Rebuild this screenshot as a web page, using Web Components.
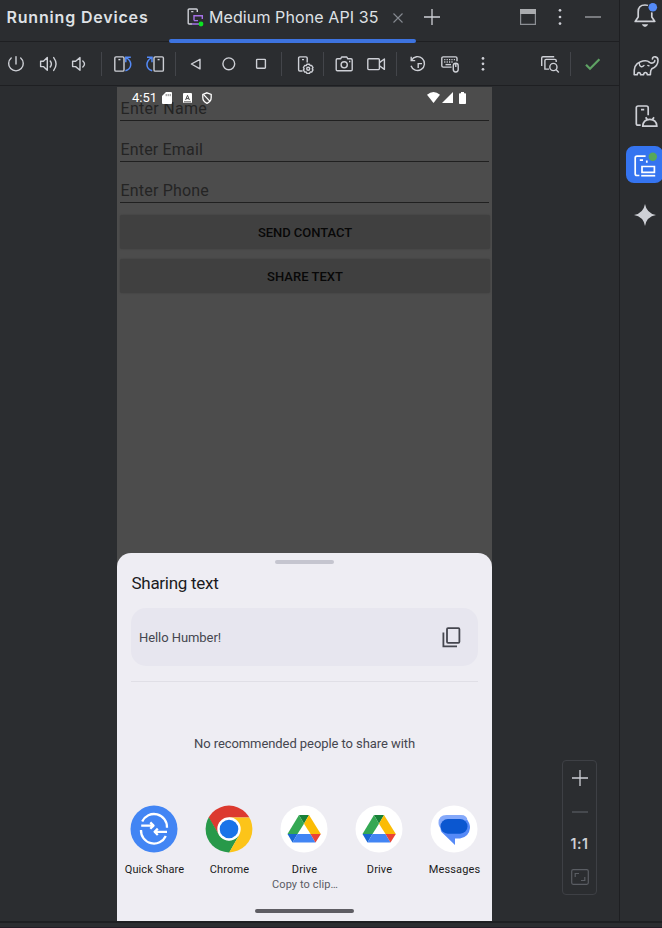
<!DOCTYPE html>
<html lang="en"><head><meta charset="utf-8"><title>Running Devices</title>
<style>
html,body{margin:0;height:928px;overflow:hidden;background:#2b2d30}
body{font-family:Inter,"Liberation Sans",sans-serif;color:#dfe1e5}
</style></head><body>
<ide-window></ide-window>
<script>
const G='stroke="#ced0d6" fill="none" stroke-width="1.4"';
const GEAR=(x,y)=>`<g transform="translate(${x} ${y})"><path d="M-1.3-4.6H1.3L2-3.2 3.5-3.3 4.8-1.1 4 0 4.8 1.1 3.5 3.3 2 3.2 1.3 4.6H-1.3L-2 3.2-3.5 3.3-4.8 1.1-4 0-4.8-1.1-3.5-3.3-2-3.2Z" stroke-linejoin="round"/><circle r="1.5"/></g>`;
const DRIVE='<circle cx="24" cy="24" r="23.5" fill="#fff"/><path d="M19 10h10l-5 8.7z" fill="#188038"/><path d="M19 10 7.5 29h10L24 18.7z" fill="#34a853"/><path d="M29 10 24 18.7 30.5 29h10.3z" fill="#fbbc04"/><path d="M7.5 29h10l-5 8.5z" fill="#1967d2"/><path d="M17.5 29h13l5 8.5h-23z" fill="#4285f4"/><path d="M30.5 29h10.3l-5.3 8.5z" fill="#ea4335"/>';
/* name: [width, height, markup] */
const ICONS={
power:[20,20,`<g ${G} stroke-linecap="round"><path d="M5.2 4A7.3 7.3 0 1 0 14.7 4M10 2.6V10"/></g>`],
volup:[20,20,`<g ${G} stroke-linejoin="round" stroke-linecap="round"><path d="M2.6 7.3H5.4L9.3 3.6V16.2L5.4 12.6H2.6ZM12.2 7Q14.6 10 12.2 13M15.7 3.6Q20.4 10 15.7 16.4"/></g>`],
voldown:[20,20,`<g ${G} stroke-linejoin="round" stroke-linecap="round"><path d="M3.6 7.3H6.6L11 3.6V16.2L6.6 12.6H3.6ZM13.8 7Q17.2 10 13.8 13"/></g>`],
rotl:[20,20,`<g ${G}><rect x="2.8" y="2.9" width="9.2" height="14.2" rx="1.2"/><path d="M6.4 5.6h2"/><g stroke="#548af7" stroke-width="1.5"><path d="M13.4 16.8C20 15 20.6 7.5 14.6 3.8M13.8 8.2V3.3H18.8"/></g></g>`],
rotr:[20,20,`<g ${G}><rect x="9" y="2.9" width="9.4" height="14.2" rx="1.2"/><path d="M12.6 5.6h2"/><g stroke="#548af7" stroke-width="1.5"><path d="M7.2 16.8C.6 15 .2 7.5 6.2 3.8M2 3.3H7V8.2"/></g></g>`],
back:[20,20,`<path ${G} stroke-linejoin="round" d="M5.4 10 14 5.3V14.9Z"/>`],
home:[20,20,`<circle ${G} cx="9.8" cy="9.8" r="5.9"/>`],
square:[20,20,`<rect ${G} x="5.6" y="5.4" width="8.8" height="8.8" rx=".7"/>`],
device:[20,20,`<g ${G}><path d="M7.5 17H4.8Q3.6 17 3.6 15.8V4Q3.6 2.9 4.8 2.9H11Q12.2 2.9 12.2 4V8.6M7 5.6h2"/>${GEAR(13.2,14.8)}</g>`],
camera:[20,20,`<g ${G} stroke-linejoin="round"><path d="M6.6 4.8 7.6 3H12.8L13.8 4.8H17Q18.2 4.8 18.2 6V15.6Q18.2 16.8 17 16.8H3.4Q2.2 16.8 2.2 15.6V6Q2.2 4.8 3.4 4.8Z"/><circle cx="10.2" cy="10.8" r="3.1"/><path d="M15 7.5h1.4"/></g>`],
video:[20,20,`<g ${G} stroke-linejoin="round"><rect x="1.8" y="4.8" width="11.6" height="10.8" rx="1"/><path d="M13.4 8.6 18.4 5V15.4L13.4 11.8"/></g>`],
restore:[20,20,`<g ${G}><path d="M3.5 6.3A6.9 6.9 0 1 1 3 11.7M3.2 2.8V6.6H7.2M10.2 14V9.6H14"/></g>`],
keyboard:[20,20,`<g ${G}><path d="M11.6 13.1H3.2Q1.8 13.1 1.8 11.7V4.2Q1.8 2.9 3.2 2.9H15.6Q17 2.9 17 4.2V7.2"/><path d="M4.2 5.6H15M4.2 8H13" stroke-dasharray="1.2 1.2"/><path d="M5.5 10.6H11"/><rect x="13.3" y="9.3" width="4.9" height="8.7" rx="2.4"/><path d="M15.8 9.5V13"/></g>`],
more:[20,20,`<g fill="#ced0d6"><circle cx="10" cy="4.4" r="1.35"/><circle cx="10" cy="9.8" r="1.35"/><circle cx="10" cy="15.3" r="1.35"/></g>`],
inspect:[20,20,`<g ${G}><path d="M1.7 12V4Q1.7 2.8 3 2.8H14.2M9 15.1H4.9V6.5Q4.9 5.4 6 5.4H15Q16.2 5.4 16.2 6.5V8"/><circle cx="13.4" cy="13" r="3.6"/><path d="M16 15.6 18.8 18.4"/></g>`],
check:[20,20,`<path d="M4 10.7 8 14.8 17.4 5.2" fill="none" stroke="#5fa264" stroke-width="2.2"/>`],
tabdevice:[20,20,`<g ${G}><path d="M6 17H3.2Q2.2 17 2.2 16V3Q2.2 2 3.2 2H10.3Q11.3 2 11.3 3V5M5.2 4.6h2.2"/><g stroke="#a571e6"><path d="M8 13.6V8.7H16.3V12M8 13.6H12M6 17H13"/></g></g><circle cx="15" cy="17" r="2.4" fill="#0de422"/>`],
close:[12,12,`<path d="M1.5 1.5 10.5 10.5M10.5 1.5 1.5 10.5" stroke="#868a91" stroke-width="1.1"/>`],
plus:[18,18,`<path d="M9 1V17M1 9H17" stroke="#ced0d6" stroke-width="1.3"/>`],
window:[16,16,`<path d="M.6.6H15.4V15.4H.6Z" fill="none" stroke="#8c8f94" stroke-width="1.2"/><path d="M0 0H16V5H0Z" fill="#aaacaf"/>`],
dots:[6,18,`<g fill="#ced0d6"><circle cx="3" cy="2.3" r="1.35"/><circle cx="3" cy="9" r="1.35"/><circle cx="3" cy="15.6" r="1.35"/></g>`],
minus:[16,2,`<path d="M0 1H16" stroke="#9a9ca1" stroke-width="1.4"/>`],
bell:[26,26,`<g ${G} style="stroke-width:1.7"><path d="M3.2 19.4 6.2 15V9.8Q6.2 3 13 3T19.8 9.8V15L22.8 19.4Z" stroke-linejoin="round"/></g><path d="M9.8 22.3H16.2Q15 25 13 25T9.8 22.3Z" fill="#ced0d6"/><circle cx="20.8" cy="5.2" r="5.2" fill="#2b2d30"/><circle cx="20.8" cy="5.2" r="4.3" fill="#548af7"/>`],
gradle:[28,24,`<g ${G} style="stroke-width:1.6" stroke-linejoin="round" stroke-linecap="round"><path d="M20.4 5C20.8 2 26 1.8 26 6.4C26 10.6 22.4 13.6 19.8 14.8C18.2 16.2 18.6 18 18.4 20.8H15.4C15 17.8 11.9 17.8 11.5 20.8H8.7C8.3 17.8 5.6 17.8 5.2 20.8H2.2C1.8 14 4 9.2 8 8C12 6.4 15.5 6.4 17.6 8.4C20 10 23 8.6 22.8 6.6"/><path d="M7.2 9C7.4 13 10 13.6 12 11.4" stroke-width="1.4"/><path d="M15.8 11.4 17 11.8" stroke-width="1.4"/></g>`],
android:[26,26,`<g ${G} style="stroke-width:1.7"><path d="M7.7 22.2H5.2Q3.3 22.2 3.3 20.4V4.8Q3.3 3 5.2 3H13.4Q15.2 3 15.2 4.8V12.3M8 6.7h3.2"/><path d="M9.7 23.2Q10.2 16.4 16.8 16.4T23.9 23.2ZM12.7 14.2 14.4 17M21 14.2 19.2 17" stroke-linejoin="round"/></g>`],
running:[26,26,`<g fill="none" stroke="#fff" stroke-width="1.7"><path d="M7.4 22.5H5Q3.2 22.5 3.2 20.7V5Q3.2 3.2 5 3.2H13.6M14.8 7.5V9.8M7.8 7.1H11"/><path d="M10 13.5H22.4V19.3H10Z"/><path d="M9.2 22.7H23.2"/></g><circle cx="20.8" cy="3.7" r="4.2" fill="#57a85b"/>`],
spark:[22,22,`<path d="M11 0Q12.6 9.4 22 11Q12.6 12.6 11 22Q9.4 12.6 0 11Q9.4 9.4 11 0Z" fill="#ced0d6"/>`],
sd:[10,12,`<path d="M4 0H9Q10 0 10 1V11Q10 12 9 12H1Q0 12 0 11V4Z" fill="#fff"/><path d="M4.2 2V4.2M6.2 2V4.2M8.2 2V4.2" stroke="#777" stroke-width=".9"/>`],
aicon:[9,10,`<rect width="9" height="10" rx="1" fill="#fff"/><path d="M2.6 7 4.5 2.3 6.4 7M3.2 5.6H5.8M1 8.9H8" fill="none" stroke="#4c4c4c"/>`],
shield:[10,12,`<path d="M5 .8 9.2 2.4V5.5Q9.2 9.5 5 11.3Q.8 9.5.8 5.5V2.4Z" fill="none" stroke="#fff" stroke-width="1.3"/><path d="M1.4 2.4 8 9.4" stroke="#fff" stroke-width="1.3" fill="none"/>`],
wifi:[13,11,`<path d="M0 2.8Q6.5-2.6 13 2.8L6.5 11Z" fill="#fff"/>`],
signal:[11,11,`<path d="M11 0V11H0Z" fill="#fff"/>`],
battery:[7,12,`<path d="M2 0H5V1.2H6.2Q7 1.2 7 2V11.2Q7 12 6.2 12H.8Q0 12 0 11.2V2Q0 1.2.8 1.2H2Z" fill="#fff"/>`],
copy:[19,21,`<g fill="none" stroke="#45464f" stroke-width="1.8"><rect x="5" y="1.2" width="12.4" height="14.6" rx="1"/><path d="M1.4 5.5V19.4H15"/></g>`],
quick:[48,48,`<circle cx="24" cy="24" r="23.5" fill="#4285f4"/><g fill="none" stroke="#fff" stroke-width="2.3" stroke-linejoin="round"><path d="M12.2 16.6A13 13 0 0 1 37 22.8M11.2 20.6H23M20.3 17.4 23.5 20.6 20.3 23.8M11 25A13 13 0 0 0 35.8 31M37 26.8H25M27.8 23.6 24.6 26.8 27.8 30"/></g>`],
chrome:[48,48,`<clipPath id="c"><circle cx="24" cy="24" r="23.4"/></clipPath><g clip-path="url(#c)"><path d="M0 0H48V12.5H24L14 30 3.5 12.5 0 14Z" fill="#dc3a2f"/><path d="M3.7 12 14 29.8 24 35.5 34.2 30 24 48H0V12Z" fill="#28994a"/><path d="M24 12.5H48V48H23.9L34.2 30Z" fill="#fcc419"/></g><circle cx="24" cy="24" r="11.7" fill="#fff"/><circle cx="24" cy="24" r="9.3" fill="#1a73e8"/>`],
drive:[48,48,DRIVE],
messages:[48,48,`<circle cx="24" cy="24" r="23.5" fill="#fff"/><path d="M16.5 10H31Q37 10 37.5 15.5L36 25H13Q8.5 22.5 8.5 18Q8.5 10 16.5 10Z" fill="#85a9fa"/><path d="M37.2 15Q40 18 40 23Q39 32 30 33.5H25V40L11.5 27Q10 25 11 20Z" fill="#568af7"/><rect x="10.5" y="14" width="27" height="14.7" rx="7.3" fill="#0b57d0"/>`],
fit:[18,16,`<g fill="none" stroke="#5a5d63" stroke-width="1.2"><rect x=".7" y=".7" width="16.6" height="14.6" rx="1.5"/><path d="M4.2 8V4.5H8M10 11.5H13.8V8"/></g>`],
line:[18,2,`<path d="M1 1H17" stroke="#5a5d63" stroke-width="1.2"/>`]
};
function define(name,html,after){
  const t=document.createElement('template');t.innerHTML=html;
  customElements.define(name,class extends HTMLElement{
    connectedCallback(){
      if(this.shadowRoot)return;
      this.attachShadow({mode:'open'}).append(t.content.cloneNode(true));
      if(after)after.call(this,this.shadowRoot);
    }
  });
}
define('ui-icon','<style>:host{display:block;flex:none}svg,span{display:block;overflow:visible}</style><span></span>',function(r){
  const [w,h,m]=ICONS[this.getAttribute('name')];
  r.querySelector('span').innerHTML=`<svg width="${w}" height="${h}" viewBox="0 0 ${w} ${h}">${m}</svg>`;
});
/* One line of text, tracked so that it occupies the given width. */
define('text-run','<style>:host{display:block;white-space:nowrap;flex:none}span{display:inline-block}</style><span></span>',function(r){
  const s=r.querySelector('span');s.textContent=this.getAttribute('text');
  const w=+this.getAttribute('w');
  s.style.letterSpacing=((w-s.getBoundingClientRect().width)/s.textContent.length)+'px';
});
define('tool-sep','<style>:host{display:block;flex:none;width:1px;height:24px;margin-top:-2px;background:#43454a}</style>');
define('tab-bar',`<style>
:host{display:grid;grid-template-columns:169px 247px 1fr;height:41px;border-bottom:1px solid #1e1f22;box-sizing:content-box}
.t{padding:7px 0 0 6.5px;font:600 16px/20px Inter,sans-serif}
.tab{display:flex;height:43px;box-sizing:border-box;padding:7px 0 0 17px;position:relative}
.tab::after{content:"";position:absolute;left:0;right:0;bottom:0;height:4px;border-radius:2px;background:#3d73df}
.tab text-run{font:400 16px/20px Inter,sans-serif;margin-left:3px}
.tab ui-icon[name=close]{margin:5px 0 0 13px}
.r{display:flex}
</style><text-run class="t" text="Running Devices" w="142"></text-run>
<div class="tab"><ui-icon name="tabdevice"></ui-icon><text-run text="Medium Phone API 35" w="169.5"></text-run><ui-icon name="close"></ui-icon></div>
<div class="r"><ui-icon name="plus" style="margin:8px 0 0 7px"></ui-icon><ui-icon name="window" style="margin:9px 0 0 79px"></ui-icon><ui-icon name="dots" style="margin:8px 0 0 21px"></ui-icon><ui-icon name="minus" style="margin:16px 0 0 22px"></ui-icon></div>`);
const tools=[['power',6],['volup',12],['voldown',11],[0,12],['rotl',10],['rotr',13],[0,10],['back',10],['home',13],['square',12],[0,10],['device',13],[0,8],['camera',10],['video',12],[0,10],['restore',11],['keyboard',12],['more',13],['inspect',47],[0,10],['check',11]];
define('device-toolbar',`<style>:host{display:flex;height:44px;box-sizing:border-box;padding-top:12px;border-bottom:1px solid #1e1f22}</style>`+tools.map(([n,m])=>n?`<ui-icon name="${n}" style="margin-left:${m}px"></ui-icon>`:`<tool-sep style="margin-left:${m}px"></tool-sep>`).join(''));
define('form-field',`<style>:host{display:block;height:41px;box-sizing:border-box;padding:0 1px;font:400 16px/24px Roboto,sans-serif;color:#242424}
div{height:24px;border-bottom:1px solid #202020;padding:0 0 0 .5px;box-sizing:border-box}</style><div></div>`,function(r){
  r.querySelector('div').innerHTML=`<text-run text="${this.getAttribute('text')}" w="${this.getAttribute('w')}"></text-run>`;
});
define('app-button',`<style>:host{display:flex;justify-content:center;align-items:center;height:34px;box-sizing:border-box;padding-top:2px;background:#404040;border-radius:2px;box-shadow:0 0 2px #3c3c3c;font:500 13px/16px Roboto,sans-serif;color:#080808}</style><slot></slot>`);
define('status-bar',`<style>:host{display:flex;position:absolute;left:0;top:0;right:0;height:22px;color:#fff;font:400 13px/16px Roboto,sans-serif}</style>
<text-run text="4:51" w="25" style="margin:3px 0 0 15px"></text-run><ui-icon name="sd" style="margin:5px 0 0 5px"></ui-icon><ui-icon name="aicon" style="margin:6px 0 0 11px"></ui-icon><ui-icon name="shield" style="margin:5px 0 0 10px"></ui-icon>
<ui-icon name="wifi" style="margin:5px 0 0 auto"></ui-icon><ui-icon name="signal" style="margin:5px 0 0 2px"></ui-icon><ui-icon name="battery" style="margin:5px 26px 0 6px"></ui-icon>`);
define('share-target',`<style>:host{display:block;width:75px;font:400 11px/15px Roboto,sans-serif;color:#1b1b21}div{display:flex;flex-direction:column;align-items:center}
ui-icon{margin-right:1px}text-run{margin-top:9px}.s{margin:0 0 0 1px;color:#5b5b63}</style><div></div>`,function(r){
  const a=n=>this.getAttribute(n);
  r.querySelector('div').innerHTML=`<ui-icon name="${a('icon')}"></ui-icon><text-run text="${a('label')}" w="${a('w')}"></text-run>`+(a('sub')?`<text-run class="s" text="${a('sub')}" w="${a('sw')}"></text-run>`:'');
});
define('share-sheet',`<style>
:host{display:flex;flex-direction:column;height:368px;box-sizing:border-box;background:#eeedf3;border-radius:14px 14px 0 0;font-family:Roboto,sans-serif;color:#1b1b21}
.h{width:59px;height:4px;border-radius:2px;background:#c5c5cf;margin:7px auto 0;flex:none}
.title{font:400 17px/22px Roboto,sans-serif;margin:8px 0 0 14.5px}
.card{display:flex;align-items:center;justify-content:space-between;height:58px;box-sizing:border-box;margin:14px 14px 0;padding:0 17.5px 0 8px;border-radius:15px;background:#e7e6ef;color:#45464f;font:400 13px/18px Roboto,sans-serif}
.card text-run{margin-top:2px}
.d{height:1px;margin:15px 14px 0;background:#e0dfe6}
.n{align-self:center;margin-top:53px;font:400 13px/18px Roboto,sans-serif;color:#45464f}
.apps{display:flex;margin-top:52px}
.bar{width:99px;height:4px;border-radius:2px;background:#5e5d63;margin:auto auto 8px}
</style><div class="h"></div><text-run class="title" text="Sharing text" w="87"></text-run>
<div class="card"><text-run text="Hello Humber!" w="82"></text-run><ui-icon name="copy"></ui-icon></div><div class="d"></div>
<text-run class="n" text="No recommended people to share with" w="221"></text-run>
<div class="apps"><share-target icon="quick" label="Quick Share" w="59.5"></share-target><share-target icon="chrome" label="Chrome" w="39.5"></share-target><share-target icon="drive" label="Drive" w="25.5" sub="Copy to clip…" sw="66"></share-target><share-target icon="drive" label="Drive" w="25.5"></share-target><share-target icon="messages" label="Messages" w="51.5"></share-target></div><div class="bar"></div>`);
define('phone-screen',`<style>
:host{display:flex;flex-direction:column;position:relative;width:375px;height:834px;background:#4c4c4c}
.f{padding:10px 2px 0;height:118px}.b{display:grid;gap:10px;padding:0 2px 0 3px}share-sheet{margin-top:auto}
</style><div class="f"><form-field text="Enter Name" w="86.5"></form-field><form-field text="Enter Email" w="82.5"></form-field><form-field text="Enter Phone" w="88.5"></form-field></div>
<div class="b"><app-button><text-run text="SEND CONTACT" w="94"></text-run></app-button><app-button><text-run text="SHARE TEXT" w="76"></text-run></app-button></div>
<share-sheet></share-sheet><status-bar></status-bar>`);
define('zoom-panel',`<style>:host{display:flex;flex-direction:column;align-items:center;width:35px;height:135px;box-sizing:border-box;border:1px solid #3e4045;border-radius:4px;padding-top:8px}
text-run{font:600 14px/18px Inter,sans-serif;margin:22px 0 16px;color:#ced0d6}</style><ui-icon name="plus"></ui-icon><ui-icon name="line" style="margin-top:24px"></ui-icon><text-run text="1:1" w="18"></text-run><ui-icon name="fit"></ui-icon>`);
define('side-strip',`<style>:host{display:flex;flex-direction:column;width:42px;border-left:1px solid #1e1f22;overflow:hidden}
.on{background:#3574f0;border-radius:8px;width:37px;height:37px;margin:17px 0 0 6px;padding:6.5px 0 0 6px;box-sizing:border-box}</style>
<ui-icon name="bell" style="margin:2px 0 0 12px"></ui-icon><ui-icon name="gradle" style="margin:26px 0 0 12px"></ui-icon><ui-icon name="android" style="margin:25px 0 0 12.5px"></ui-icon><div class="on"><ui-icon name="running"></ui-icon></div><ui-icon name="spark" style="margin:21px 0 0 14px"></ui-icon>`);
define('ide-window',`<style>
:host{display:grid;grid-template-columns:619px 43px;grid-template-rows:921px 7px;width:662px;height:928px;background:#2b2d30}
.stage{display:flex;height:835px;padding:1px 0 0 117px;box-sizing:border-box}
zoom-panel{margin:673px 0 0 70px}
.foot{grid-column:1/3;border-top:2px solid #1e1f22;border-bottom:1px solid #241d27;box-sizing:border-box}
</style><main><tab-bar></tab-bar><device-toolbar></device-toolbar><div class="stage"><phone-screen></phone-screen><zoom-panel></zoom-panel></div></main><side-strip></side-strip><div class="foot"></div>`);
</script></body></html>
